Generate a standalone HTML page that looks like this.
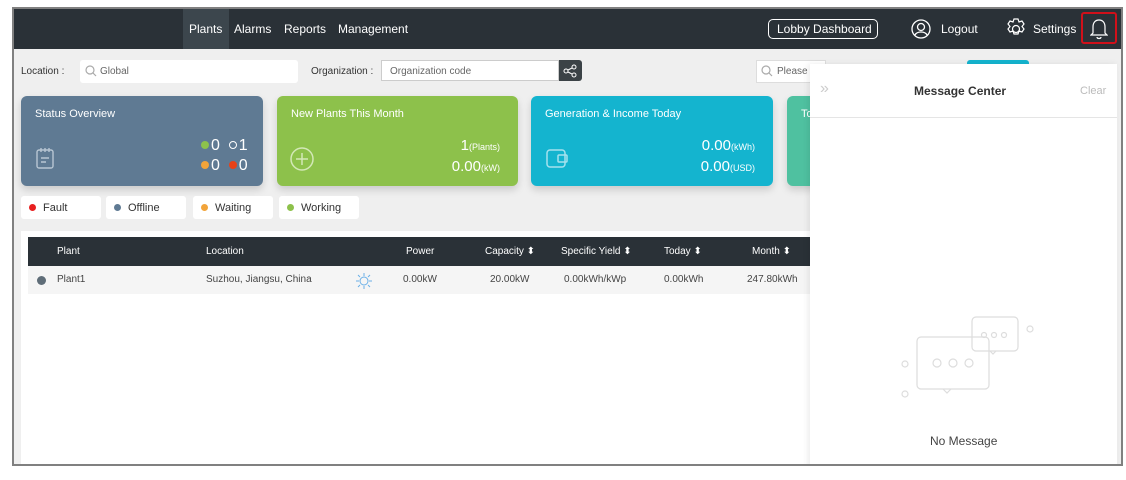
<!DOCTYPE html>
<html><head><meta charset="utf-8"><style>
*{box-sizing:border-box;margin:0;padding:0}
body{width:1126px;height:480px;background:#fff;font-family:"Liberation Sans",sans-serif;position:relative;overflow:hidden;font-size:11px;color:#333}
.frame{position:absolute;left:12px;top:7px;width:1111px;height:459px;border:2px solid #808080;background:#efefef;overflow:hidden}
.nav{position:absolute;left:0;top:0;width:100%;height:40px;background:#2a3137;color:#fff;font-size:12px}
.nav span{position:absolute;top:13px}
.abs{position:absolute}
.card{position:absolute;top:87px;height:90px;border-radius:6px;color:#fff;box-shadow:0 4px 8px rgba(0,0,0,.15)}
.card .t{position:absolute;left:14px;top:12px;font-size:11px}
.leg{position:absolute;top:187px;height:23px;background:#fff;border-radius:3px;font-size:11px;padding:6px 0 0 22px}
.leg i{position:absolute;left:8px;top:8px;width:7px;height:7px;border-radius:50%}
.th{position:absolute;color:#fff;font-size:10px}
.td{position:absolute;font-size:10px;color:#444}
.d{display:inline-block;width:8px;height:8px;border-radius:50%;margin-right:2px;vertical-align:1px}
</style></head><body>
<div class="frame">
 <div class="nav">
  <div class="abs" style="left:169px;top:0;width:46px;height:40px;background:#3c464d"></div>
  <span style="left:175px">Plants</span><span style="left:220px">Alarms</span><span style="left:270px">Reports</span><span style="left:324px">Management</span>
  <div class="abs" style="left:754px;top:10px;width:110px;height:20px;border:1px solid #fff;border-radius:5px;font-size:12px;padding:2px 0 0 8px">Lobby Dashboard</div>
  <svg class="abs" style="left:896px;top:9px" width="22" height="22" viewBox="0 0 22 22" fill="none" stroke="#fff" stroke-width="1.3"><circle cx="11" cy="11" r="9"/><circle cx="11" cy="9" r="3.5"/><path d="M5 17c2-4 10-4 12 0"/></svg>
  <span style="left:927px">Logout</span>
  <svg class="abs" style="left:990px;top:8px" width="24" height="24" viewBox="0 0 24 24" fill="none" stroke="#fff" stroke-width="1.2"><path d="M10 2h4l1 3 3-1 2 3-2 2.5 2 2.5-2 3-3-1-1 3h-4l-1-3-3 1-2-3 2-2.5L4 7l2-3 3 1z"/><circle cx="12" cy="12" r="3.5"/></svg>
  <span style="left:1019px">Settings</span>
  <div class="abs" style="left:1067px;top:3px;width:36px;height:32px;border:2px solid #d0101a;border-radius:3px"></div>
  <svg class="abs" style="left:1076px;top:9px" width="18" height="22" viewBox="0 0 18 22" fill="none" stroke="#fff" stroke-width="1.2"><path d="M9 2c-4 0-6 3-6 7v6l-2 2h16l-2-2V9c0-4-2-7-6-7z"/><path d="M7 19c0 2 4 2 4 0"/></svg>
 </div>
 <div class="abs" style="left:7px;top:57px;font-size:10px">Location :</div>
 <div class="abs" style="left:66px;top:51px;width:218px;height:23px;background:#fff;border-radius:3px;font-size:10px;color:#666;padding:6px 0 0 20px">Global</div>
 <svg class="abs" style="left:71px;top:56px" width="12" height="12" fill="none" stroke="#aaa" stroke-width="1.2"><circle cx="5" cy="5" r="4"/><path d="M8 8l3 3"/></svg>
 <div class="abs" style="left:297px;top:57px;font-size:10px">Organization :</div>
 <div class="abs" style="left:367px;top:51px;width:178px;height:21px;background:#fff;border:1px solid #ccc;font-size:10px;color:#666;padding:5px 0 0 8px">Organization code</div>
 <div class="abs" style="left:545px;top:51px;width:23px;height:21px;background:#3b4246;border-radius:0 3px 3px 0"></div>
 <svg class="abs" style="left:549px;top:55px" width="14" height="14" fill="none" stroke="#fff" stroke-width="1"><circle cx="3" cy="7" r="2"/><circle cx="11" cy="3" r="2"/><circle cx="11" cy="11" r="2"/><path d="M5 6l4-2M5 8l4 2"/></svg>
 <div class="abs" style="left:742px;top:51px;width:70px;height:23px;background:#fff;border:1px solid #ddd;font-size:10px;color:#666;padding:5px 0 0 20px">Please e</div>
 <svg class="abs" style="left:747px;top:56px" width="12" height="12" fill="none" stroke="#aaa" stroke-width="1.2"><circle cx="5" cy="5" r="4"/><path d="M8 8l3 3"/></svg>
 <div class="abs" style="left:953px;top:51px;width:62px;height:10px;background:#14b4cf;border-radius:3px 3px 0 0"></div>

 <div class="card" style="left:7px;width:242px;background:#5f7a93"><div class="t">Status Overview</div>
  <svg class="abs" style="left:14px;top:50px" width="20" height="24" fill="none" stroke="#b8c6d3" stroke-width="1.4"><rect x="2" y="4" width="16" height="18" rx="2"/><path d="M6 2v4M10 2v4M14 2v4M6 12h8M6 16h5"/></svg>
  <div class="abs" style="left:180px;top:40px;font-size:16px;line-height:20px"><span class="d" style="background:#8dc14b"></span>0 &nbsp;<span class="d" style="border:1px solid #fff"></span>1<br><span class="d" style="background:#f2a43a"></span>0 &nbsp;<span class="d" style="background:#e84118"></span>0</div>
 </div>
 <div class="card" style="left:263px;width:241px;background:#8dc14b"><div class="t">New Plants This Month</div>
  <svg class="abs" style="left:12px;top:50px" width="26" height="26" fill="none" stroke="#d3e8b7" stroke-width="1.5"><circle cx="13" cy="13" r="11"/><path d="M13 7v12M7 13h12"/></svg>
  <div class="abs" style="right:18px;top:40px;text-align:right;font-size:15px;line-height:19px">1<span style="font-size:9px">(Plants)</span><br>0.00<span style="font-size:9px">(kW)</span></div>
 </div>
 <div class="card" style="left:517px;width:242px;background:#14b4cf"><div class="t">Generation &amp; Income Today</div>
  <svg class="abs" style="left:14px;top:52px" width="26" height="22" fill="none" stroke="#a6e2ee" stroke-width="1.5"><rect x="2" y="2" width="18" height="17" rx="3"/><rect x="13" y="7" width="9" height="7" rx="1"/></svg>
  <div class="abs" style="right:18px;top:40px;text-align:right;font-size:15px;line-height:19px">0.00<span style="font-size:9px">(kWh)</span><br>0.00<span style="font-size:9px">(USD)</span></div>
 </div>
 <div class="card" style="left:773px;width:120px;background:#4fc1a0"><div class="t">To</div></div>

 <div class="leg" style="left:7px;width:80px"><i style="background:#e81f1f"></i>Fault</div>
 <div class="leg" style="left:92px;width:80px"><i style="background:#5f7a93"></i>Offline</div>
 <div class="leg" style="left:179px;width:80px"><i style="background:#f2a43a"></i>Waiting</div>
 <div class="leg" style="left:265px;width:80px"><i style="background:#8dc14b"></i>Working</div>

 <div class="abs" style="left:7px;top:222px;width:900px;height:240px;background:#fff">
  <div class="abs" style="left:7px;top:6px;width:890px;height:29px;background:#2a3137"></div>
  <div class="abs" style="left:7px;top:35px;width:890px;height:28px;background:#f5f5f5"></div>
  <div class="th" style="left:36px;top:15px">Plant</div><div class="th" style="left:185px;top:15px">Location</div><div class="th" style="left:385px;top:15px">Power</div><div class="th" style="left:464px;top:15px">Capacity ⬍</div><div class="th" style="left:540px;top:15px">Specific Yield ⬍</div><div class="th" style="left:643px;top:15px">Today ⬍</div><div class="th" style="left:731px;top:15px">Month ⬍</div>
  <div class="abs" style="left:16px;top:45px;width:9px;height:9px;border-radius:50%;background:#5f6d78"></div>
  <div class="td" style="left:36px;top:43px">Plant1</div><div class="td" style="left:185px;top:43px">Suzhou, Jiangsu, China</div>
  <svg class="abs" style="left:334px;top:41px" width="18" height="18" fill="none" stroke="#6ab0e8" stroke-width="1"><circle cx="9" cy="9" r="4"/><path d="M9 1v3M9 14v3M1 9h3M14 9h3M3 3l2 2M13 13l2 2M3 15l2-2M13 5l2-2"/></svg>
  <div class="td" style="left:382px;top:43px">0.00kW</div><div class="td" style="left:469px;top:43px">20.00kW</div><div class="td" style="left:543px;top:43px">0.00kWh/kWp</div><div class="td" style="left:643px;top:43px">0.00kWh</div><div class="td" style="left:726px;top:43px">247.80kWh</div>
 </div>

 <div class="abs" style="left:796px;top:55px;width:307px;height:410px;background:#fff;box-shadow:-2px 0 6px rgba(0,0,0,.08)">
  <div class="abs" style="left:10px;top:16px;color:#ccc;font-size:16px">»</div>
  <div class="abs" style="left:104px;top:20px;font-size:12px;font-weight:bold;color:#333">Message Center</div>
  <div class="abs" style="left:270px;top:21px;font-size:11px;color:#bbb">Clear</div>
  <div class="abs" style="left:0;top:53px;width:100%;height:1px;background:#e5e5e5"></div>
  <svg class="abs" style="left:70px;top:233px" width="160" height="110" fill="none" stroke="#ddd" stroke-width="1.2"><rect x="37" y="40" width="72" height="52" rx="4"/><circle cx="57" cy="66" r="4"/><circle cx="73" cy="66" r="4"/><circle cx="89" cy="66" r="4"/><path d="M63 92l4 4 4-4"/><rect x="92" y="20" width="46" height="34" rx="4"/><circle cx="104" cy="38" r="2.5"/><circle cx="114" cy="38" r="2.5"/><circle cx="124" cy="38" r="2.5"/><path d="M110 54l3 3 3-3"/><circle cx="25" cy="67" r="3"/><circle cx="150" cy="32" r="3"/><circle cx="25" cy="97" r="3"/></svg>
  <div class="abs" style="left:120px;top:370px;font-size:12px;color:#444">No Message</div>
 </div>
</div>
</body></html>
